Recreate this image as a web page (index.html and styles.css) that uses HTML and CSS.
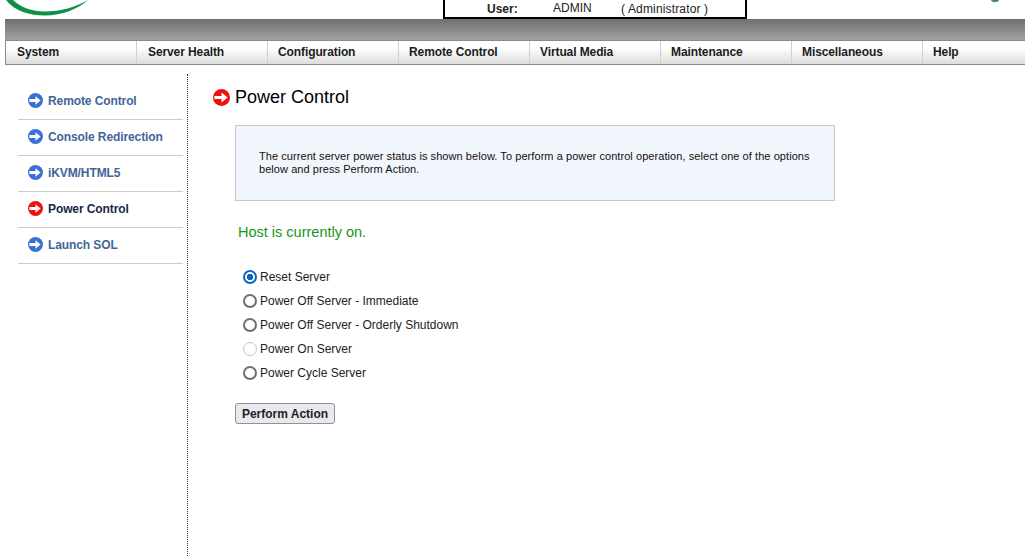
FILE: index.html
```html
<!DOCTYPE html>
<html lang="en">
<head>
  <meta charset="UTF-8">
  <meta name="viewport" content="width=device-width, initial-scale=1.0">
  <title>Power Control</title>
  <link rel="stylesheet" href="styles.css">
</head>
<body>
  <div class="header">
    <svg class="logo" width="90" height="19" viewBox="0 0 90 19">
      <path d="M6 0 C14 11 30 15.500 45 15.500 C62 15.500 78 9 88 0 C76 7 60 11.500 45 11.500 C32 11.500 20 7 13 0 Z" fill="#0d9148"/>
    </svg>
    <div class="user-box">
      <span class="user-label">User:</span>
      <span class="user-name">ADMIN</span>
      <span class="user-role">( Administrator )</span>
    </div>
    <svg class="status-dot" width="10" height="3" viewBox="0 0 10 3">
      <path d="M1 0 C2 3 8 3 9 0 Z" fill="#4d8a58"/>
    </svg>
  </div>
  <div class="band"></div>
  <div class="nav">
    <a class="nav-item">System</a>
    <a class="nav-item">Server Health</a>
    <a class="nav-item">Configuration</a>
    <a class="nav-item">Remote Control</a>
    <a class="nav-item">Virtual Media</a>
    <a class="nav-item">Maintenance</a>
    <a class="nav-item">Miscellaneous</a>
    <a class="nav-item">Help</a>
  </div>
  <div class="page">
    <div class="side">
      <a class="side-item">
        <svg class="arrow" viewBox="0 0 16 16"><circle cx="8" cy="8" r="8" fill="#3b6fd8"/><path d="M1.500 6.500H8V3.500L13.500 8L8 12.500V9.500H1.500Z" fill="#fff"/></svg>
        Remote Control
      </a>
      <a class="side-item">
        <svg class="arrow" viewBox="0 0 16 16"><circle cx="8" cy="8" r="8" fill="#3b6fd8"/><path d="M1.500 6.500H8V3.500L13.500 8L8 12.500V9.500H1.500Z" fill="#fff"/></svg>
        Console Redirection
      </a>
      <a class="side-item">
        <svg class="arrow" viewBox="0 0 16 16"><circle cx="8" cy="8" r="8" fill="#3b6fd8"/><path d="M1.500 6.500H8V3.500L13.500 8L8 12.500V9.500H1.500Z" fill="#fff"/></svg>
        iKVM/HTML5
      </a>
      <a class="side-item current">
        <svg class="arrow" viewBox="0 0 16 16"><circle cx="8" cy="8" r="8" fill="#ee1111"/><path d="M1.500 6.500H8V3.500L13.500 8L8 12.500V9.500H1.500Z" fill="#fff"/></svg>
        Power Control
      </a>
      <a class="side-item">
        <svg class="arrow" viewBox="0 0 16 16"><circle cx="8" cy="8" r="8" fill="#3b6fd8"/><path d="M1.500 6.500H8V3.500L13.500 8L8 12.500V9.500H1.500Z" fill="#fff"/></svg>
        Launch SOL
      </a>
    </div>
    <div class="main">
      <h1 class="title">
        <svg class="title-arrow" viewBox="0 0 18 18"><circle cx="9" cy="9" r="9" fill="#ee1111"/><path d="M1.500 7.300H9V3.800L15.500 9L9 14.200V10.700H1.500Z" fill="#fff"/></svg>
        Power Control
      </h1>
      <div class="info">The current server power status is shown below. To perform a power control operation, select one of the options below and press Perform Action.</div>
      <p class="status">Host is currently on.</p>
      <form class="options">
        <label class="option"><input type="radio" name="action" checked>Reset Server</label>
        <label class="option"><input type="radio" name="action">Power Off Server - Immediate</label>
        <label class="option"><input type="radio" name="action">Power Off Server - Orderly Shutdown</label>
        <label class="option"><input type="radio" name="action" disabled>Power On Server</label>
        <label class="option"><input type="radio" name="action">Power Cycle Server</label>
      </form>
      <button class="perform" type="button">Perform Action</button>
    </div>
  </div>
</body>
</html>
```
FILE: styles.css
```css
html, body {
  height: 100%;
}
body {
  margin: 0;
  background: #fff;
  color: #000;
  font-family: "Liberation Sans", Arial, sans-serif;
  overflow: hidden;
}
.header {
  height: 19px;
  display: flex;
  align-items: flex-start;
  overflow: hidden;
}
.logo {
  flex: none;
}
.user-box {
  box-sizing: border-box;
  flex: none;
  width: 304px;
  height: 19px;
  margin-left: 353px;
  border: solid #000;
  border-width: 0 2px 2px;
  font-size: 12px;
  line-height: 16px;
  color: #222;
  position: relative;
}
.user-label {
  position: absolute;
  left: 42px;
  top: 1px;
  font-weight: bold;
}
.user-name {
  position: absolute;
  left: 108px;
  top: 0;
}
.user-role {
  position: absolute;
  left: 176px;
  top: 1px;
  letter-spacing: 0.15px;
}
.status-dot {
  margin-left: 243px;
  flex: none;
}
.band {
  height: 21px;
  margin-left: 5px;
  background: linear-gradient(#6f6f6f, #a2a2a2);
}
.nav {
  box-sizing: border-box;
  height: 25px;
  margin-left: 5px;
  display: flex;
  border: solid #8a8a8a;
  border-width: 1px 0 1px 1px;
  background: linear-gradient(#fff 30%, #dcdcdc);
}
.nav-item {
  box-sizing: border-box;
  flex: none;
  width: 131px;
  padding-left: 10px;
  border-right: 1px solid #d0d0d0;
  font-size: 12px;
  font-weight: bold;
  letter-spacing: -0.1px;
  line-height: 23px;
  color: #1c1c1c;
}
.nav-item:nth-child(-n+2) {
  padding-left: 11px;
}
.nav-item:last-child {
  border-right: 0;
  flex: 1;
}
.page {
  display: flex;
  height: 491px;
}
.side {
  flex: none;
  width: 165px;
  margin-left: 18px;
  padding-top: 19px;
}
.side-item {
  height: 33px;
  display: flex;
  align-items: center;
  gap: 5px;
  padding-left: 10px;
  padding-bottom: 2px;
  border-bottom: 1px solid #cccccc;
  font-size: 12px;
  font-weight: bold;
  letter-spacing: -0.1px;
  color: #3f6598;
}
.side-item.current {
  color: #14284a;
}
.arrow {
  width: 15px;
  height: 15px;
  flex: none;
}
.main {
  flex: none;
  width: 837px;
  margin-left: 4px;
  margin-top: 9px;
  border-left: 1px dotted #2a3a78;
  padding-left: 25px;
}
.title {
  margin: 13px 0 0;
  height: 20px;
  display: flex;
  align-items: center;
  gap: 5px;
  font-size: 18px;
  font-weight: normal;
  line-height: 20px;
}
.title-arrow {
  width: 17px;
  height: 17px;
  flex: none;
}
.info {
  box-sizing: border-box;
  width: 600px;
  height: 76px;
  margin: 18px 0 0 22px;
  padding: 24px 23px 0;
  background: #f1f5fc;
  border: 1px solid #c6c8d0;
  font-size: 11px;
  letter-spacing: 0.065px;
  line-height: 13px;
  color: #111;
}
.status {
  margin: 22px 0 0 25px;
  font-size: 14.500px;
  line-height: 18px;
  color: #16961a;
}
.options {
  margin: 24px 0 0 30px;
}
.option {
  height: 24px;
  display: flex;
  align-items: center;
  gap: 3px;
  font-size: 12px;
  color: #222;
}
.option input {
  appearance: none;
  box-sizing: border-box;
  margin: 0;
  width: 14px;
  height: 14px;
  border: 2px solid #6f6f6f;
  border-radius: 50%;
  background: #fff;
}
.option input:checked {
  border-color: #0f66c4;
  background: radial-gradient(circle, #0f66c4 0 3px, #fff 3.500px);
}
.option input:disabled {
  border: 1.500px solid #c4c4c4;
}
.perform {
  display: block;
  box-sizing: border-box;
  width: 100px;
  height: 21px;
  margin: 18px 0 0 22px;
  padding: 0;
  background: #e9e9ed;
  border: 1px solid #8f8f9d;
  border-radius: 3px;
  font-family: inherit;
  font-size: 12px;
  font-weight: bold;
  color: #222;
}
```
